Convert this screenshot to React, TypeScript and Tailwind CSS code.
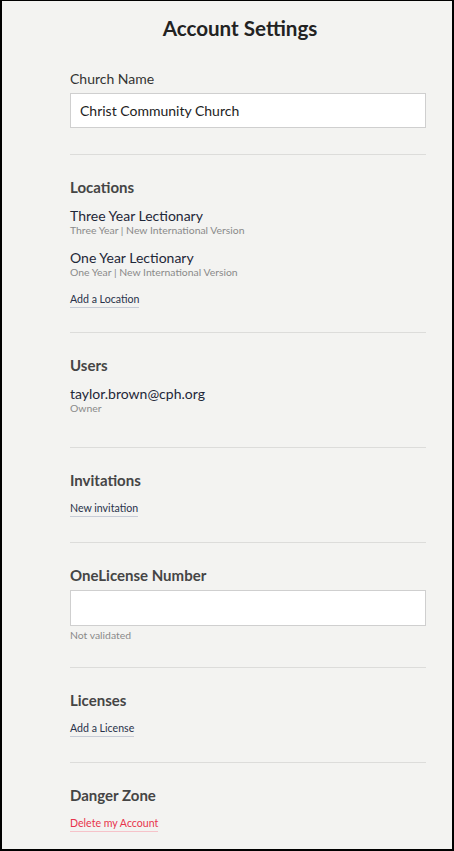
import React from "react";

type Location = { name: string; detail: string };

const locations: Location[] = [
  { name: "Three Year Lectionary", detail: "Three Year | New International Version" },
  { name: "One Year Lectionary", detail: "One Year | New International Version" },
];

function SectionHeading({ children }: { children: React.ReactNode }) {
  return <h2 className="text-[15px] leading-[20px] font-bold text-[#454545]">{children}</h2>;
}

function TextLink({ children, danger = false }: { children: React.ReactNode; danger?: boolean }) {
  return (
    <a
      href="#"
      className={
        danger
          ? "inline-block text-[10.6px] leading-[16px] text-[#e8344c] border-b border-[#f6c3c9]"
          : "inline-block text-[10.6px] leading-[16px] text-[#28324a] border-b border-[#c7ccd6]"
      }
    >
      {children}
    </a>
  );
}

export default function App() {
  return (
    <div
      className="w-[454px] h-[851px] border-x-2 border-b-2 border-t border-black bg-[#f3f3f1] overflow-hidden"
      style={{ fontFamily: "Lato, 'Open Sans', sans-serif" }}
    >
      <h1 className="pt-[13px] pl-[26px] text-center text-[20.6px] leading-[28px] font-bold text-[#222]">
        Account Settings
      </h1>

      <div className="pl-[68px] pr-[26px]">
        {/* church name */}
        <div className="pt-[27px] pb-[26px] border-b border-[#dcdcda]">
          <label className="block text-[14px] leading-[20px] text-[#333]">Church Name</label>
          <input
            type="text"
            defaultValue="Christ Community Church"
            className="mt-[4px] w-full h-[35px] px-[9px] bg-white border border-[#cfcfcf] text-[14px] text-[#222] outline-none"
          />
        </div>

        {/* locations */}
        <div className="pt-[22px] pb-[23px] border-b border-[#dcdcda]">
          <SectionHeading>Locations</SectionHeading>
          <div className="mt-[11px] flex flex-col gap-[14px]">
            {locations.map((loc) => (
              <div key={loc.name}>
                <div className="text-[14px] leading-[16px] text-[#1e2738]">{loc.name}</div>
                <div className="text-[10.4px] leading-[12px] text-[#8a8a8a]">{loc.detail}</div>
              </div>
            ))}
          </div>
          <div className="mt-[7px]">
            <TextLink>Add a Location</TextLink>
          </div>
        </div>

        {/* users */}
        <div className="pt-[22px] pb-[33px] border-b border-[#dcdcda]">
          <SectionHeading>Users</SectionHeading>
          <div className="mt-[11px]">
            <div className="text-[14px] leading-[16px] text-[#1e2738]">taylor.brown@cph.org</div>
            <div className="text-[10.4px] leading-[12px] text-[#8a8a8a]">Owner</div>
          </div>
        </div>

        {/* invitations */}
        <div className="pt-[22px] pb-[24px] border-b border-[#dcdcda]">
          <SectionHeading>Invitations</SectionHeading>
          <div className="mt-[4px]">
            <TextLink>New invitation</TextLink>
          </div>
        </div>

        {/* onelicense */}
        <div className="pt-[22px] pb-[26px] border-b border-[#dcdcda]">
          <SectionHeading>OneLicense Number</SectionHeading>
          <input
            type="text"
            className="mt-[5px] block w-full h-[36px] px-[9px] bg-white border border-[#cfcfcf] text-[14px] outline-none"
          />
          <div className="mt-[3px] text-[10.4px] leading-[12px] text-[#8a8a8a]">Not validated</div>
        </div>

        {/* licenses */}
        <div className="pt-[22px] pb-[24px] border-b border-[#dcdcda]">
          <SectionHeading>Licenses</SectionHeading>
          <div className="mt-[4px]">
            <TextLink>Add a License</TextLink>
          </div>
        </div>

        {/* danger zone */}
        <div className="pt-[22px]">
          <SectionHeading>Danger Zone</SectionHeading>
          <div className="mt-[4px]">
            <TextLink danger>Delete my Account</TextLink>
          </div>
        </div>
      </div>
    </div>
  );
}
